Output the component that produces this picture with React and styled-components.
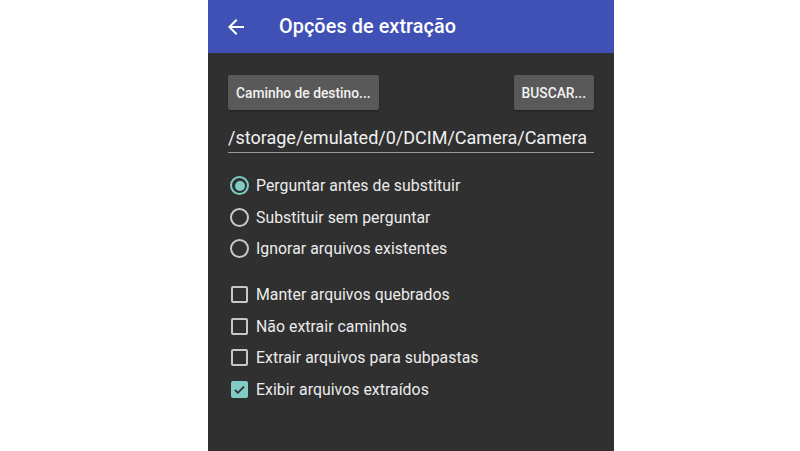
import { createGlobalStyle, styled } from "styled-components";

const GlobalStyle = createGlobalStyle`
  html, body {
    margin: 0;
    padding: 0;
    background: #ffffff;
    font-family: Roboto, "Noto Sans", sans-serif;
  }
`;

const Page = styled.div`
  width: 800px;
  height: 451px;
  padding-left: 208px;
  box-sizing: border-box;
  display: flex;
  overflow: hidden;
`;

const Phone = styled.div`
  width: 406px;
  height: 451px;
  background: #303030;
  display: flex;
  flex-direction: column;
`;

const Toolbar = styled.div`
  height: 53px;
  background: #3f51b5;
  display: flex;
  align-items: center;
  padding-left: 16px;
  box-sizing: border-box;
`;

const BackButton = styled.div`
  width: 24px;
  height: 24px;
  display: flex;
  margin-right: 31px;
`;

const Title = styled.h1`
  margin: 0;
  font-size: 19.8px;
  font-weight: 500;
  color: #ffffff;
  letter-spacing: 0.1px;
`;

const Content = styled.div`
  padding: 22px 20px 0 20px;
  display: flex;
  flex-direction: column;
`;

const ButtonRow = styled.div`
  display: flex;
  justify-content: space-between;
`;

const FlatButton = styled.button`
  height: 35px;
  padding: 0 8px;
  border: none;
  border-radius: 2px;
  background: #595959;
  color: #f2f2f2;
  font-family: Roboto, sans-serif;
  font-size: 13.8px;
  font-weight: 500;
  box-shadow: 0 1px 2px rgba(0, 0, 0, 0.35);
`;

const PathField = styled.div`
  margin-top: 17px;
  padding-bottom: 3px;
  border-bottom: 1px solid #9a9a9a;
  color: #f0f0f0;
  font-size: 18px;
  line-height: 22px;
  white-space: nowrap;
`;

const OptionGroup = styled.div`
  display: flex;
  flex-direction: column;
  margin-top: ${(p) => p.$top}px;
`;

const Option = styled.div`
  height: 31.6px;
  display: flex;
  align-items: center;
  color: #ececec;
  font-size: 15.8px;
  letter-spacing: 0.05px;
`;

const Radio = styled.span`
  width: 19px;
  height: 19px;
  margin-left: 2px;
  margin-right: 7px;
  border-radius: 50%;
  box-sizing: border-box;
  border: 2px solid ${(p) => (p.$on ? "#80cbc4" : "#c8c8c8")};
  display: flex;
  align-items: center;
  justify-content: center;

  &::after {
    content: "";
    width: 10px;
    height: 10px;
    border-radius: 50%;
    background: ${(p) => (p.$on ? "#80cbc4" : "transparent")};
  }
`;

const Box = styled.span`
  width: 17px;
  height: 17px;
  margin-left: 3px;
  margin-right: 8px;
  border-radius: 2px;
  box-sizing: border-box;
  border: 2px solid ${(p) => (p.$on ? "#80cbc4" : "#c8c8c8")};
  background: ${(p) => (p.$on ? "#80cbc4" : "transparent")};
  display: flex;
  align-items: center;
  justify-content: center;
`;

const radios = [
  { label: "Perguntar antes de substituir", on: true },
  { label: "Substituir sem perguntar", on: false },
  { label: "Ignorar arquivos existentes", on: false },
];

const checks = [
  { label: "Manter arquivos quebrados", on: false },
  { label: "Não extrair caminhos", on: false },
  { label: "Extrair arquivos para subpastas", on: false },
  { label: "Exibir arquivos extraídos", on: true },
];

export default function App() {
  return (
    <Page>
      <GlobalStyle />
      <Phone>
        <Toolbar>
          <BackButton>
            <svg width="24" height="24" viewBox="0 0 24 24">
              <path
                d="M20 11H7.83l5.59-5.59L12 4l-8 8 8 8 1.41-1.41L7.83 13H20v-2z"
                fill="#ffffff"
              />
            </svg>
          </BackButton>
          <Title>Opções de extração</Title>
        </Toolbar>
        <Content>
          <ButtonRow>
            <FlatButton>Caminho de destino...</FlatButton>
            <FlatButton>BUSCAR...</FlatButton>
          </ButtonRow>
          <PathField>/storage/emulated/0/DCIM/Camera/Camera</PathField>
          <OptionGroup $top={17}>
            {radios.map((r) => (
              <Option key={r.label}>
                <Radio $on={r.on} />
                {r.label}
              </Option>
            ))}
          </OptionGroup>
          <OptionGroup $top={14}>
            {checks.map((c) => (
              <Option key={c.label}>
                <Box $on={c.on}>
                  {c.on && (
                    <svg width="15" height="15" viewBox="0 0 24 24">
                      <path
                        d="M3.5 12.5l5.5 5.5L20.5 6.5"
                        fill="none"
                        stroke="#2e2e2e"
                        strokeWidth="3.2"
                      />
                    </svg>
                  )}
                </Box>
                {c.label}
              </Option>
            ))}
          </OptionGroup>
        </Content>
      </Phone>
    </Page>
  );
}
